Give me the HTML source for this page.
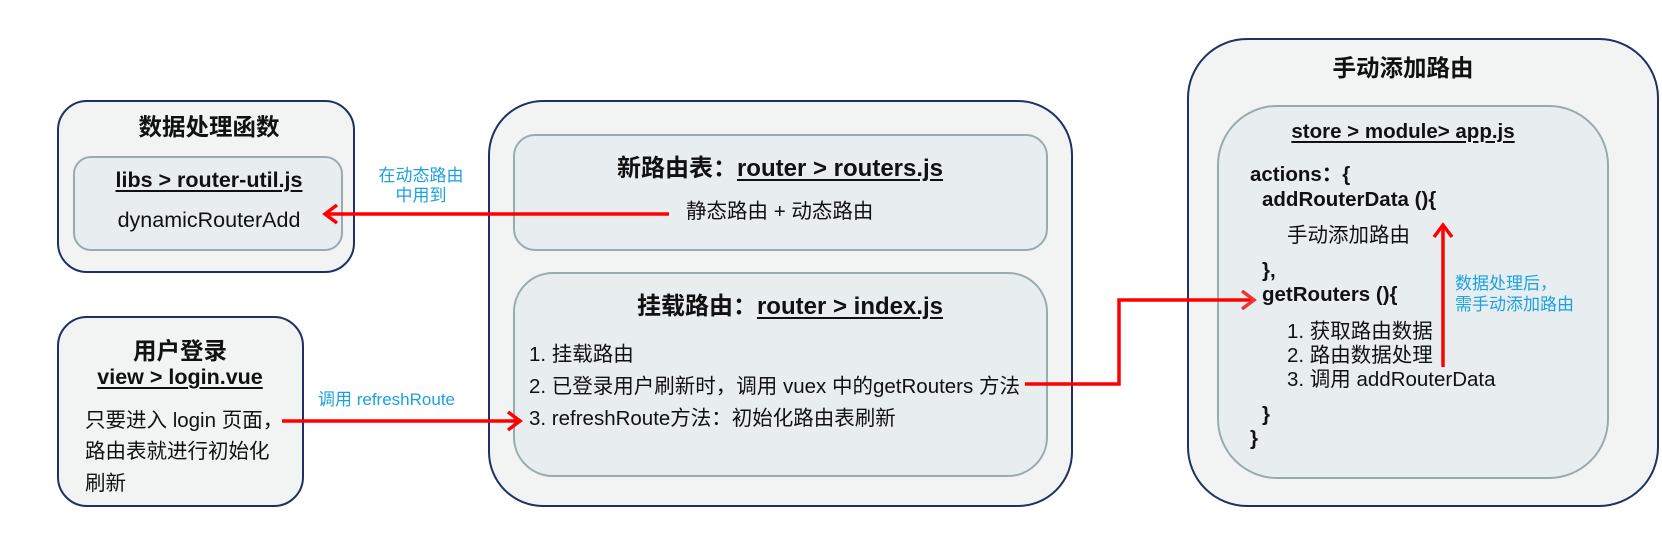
<!DOCTYPE html>
<html><head><meta charset="utf-8"><style>
*{margin:0;padding:0;box-sizing:border-box}
body{width:1662px;height:545px;background:#fff;position:relative;overflow:hidden;font-family:"Liberation Sans","Noto Sans CJK SC",sans-serif;color:#111}
.o{position:absolute;background:#f2f4f4;border:2px solid #1f3064}
.i{position:absolute;background:#e8eef0;border:2px solid #9aabb0}
.t{position:absolute;white-space:nowrap;font-size:20.5px;line-height:1}
.b{font-weight:bold}
.c{transform:translateX(-50%)}
.u{text-decoration:underline;text-underline-offset:3px}
.bl{color:#1ba1e2;font-size:17px}
svg{position:absolute;left:0;top:0}
</style></head><body>
<div class="o" style="left:57px;top:100px;width:298px;height:173px;border-radius:30px"></div>
<div class="i" style="left:73px;top:156px;width:270px;height:95px;border-radius:18px"></div>
<div class="t b c" style="left:209px;top:116px;font-size:23.5px">数据处理函数</div>
<div class="t b c u" style="left:209px;top:170px;font-size:21.5px">libs &gt; router-util.js</div>
<div class="t c" style="left:209px;top:210px;font-size:21.5px">dynamicRouterAdd</div>
<div class="t bl c" style="left:421px;top:167px">在动态路由</div>
<div class="t bl c" style="left:421px;top:187px">中用到</div>

<div class="o" style="left:57px;top:316px;width:247px;height:191px;border-radius:30px"></div>
<div class="t b c" style="left:180px;top:340px;font-size:23.5px">用户登录</div>
<div class="t b c u" style="left:180px;top:367px;font-size:21.5px">view &gt; login.vue</div>
<div class="t" style="left:85px;top:411px">只要进入 login 页面，</div>
<div class="t" style="left:85px;top:442px">路由表就进行初始化</div>
<div class="t" style="left:85px;top:474px">刷新</div>
<div class="t bl" style="left:318px;top:391px">调用 refreshRoute</div>

<div class="o" style="left:488px;top:100px;width:585px;height:407px;border-radius:55px"></div>
<div class="i" style="left:513px;top:134px;width:535px;height:117px;border-radius:22px"></div>
<div class="i" style="left:513px;top:272px;width:535px;height:205px;border-radius:40px"></div>
<div class="t b c" style="left:780px;top:157px;font-size:24px">新路由表：<span class="u">router &gt; routers.js</span></div>
<div class="t" style="left:686px;top:202px">静态路由 + 动态路由</div>
<div class="t b c" style="left:790px;top:295px;font-size:24px">挂载路由：<span class="u">router &gt; index.js</span></div>
<div class="t" style="left:529px;top:345px">1. 挂载路由</div>
<div class="t" style="left:529px;top:377px">2. 已登录用户刷新时，调用 vuex 中的getRouters 方法</div>
<div class="t" style="left:529px;top:409px">3. refreshRoute方法：初始化路由表刷新</div>

<div class="o" style="left:1187px;top:38px;width:472px;height:469px;border-radius:60px"></div>
<div class="i" style="left:1217px;top:105px;width:392px;height:374px;border-radius:60px"></div>
<div class="t b c" style="left:1403px;top:57px;font-size:23.5px">手动添加路由</div>
<div class="t b c u" style="left:1403px;top:122px;font-size:20.5px">store &gt; module&gt; app.js</div>
<div class="t b" style="left:1250px;top:165px">actions：{</div>
<div class="t b" style="left:1262px;top:190px">addRouterData (){</div>
<div class="t" style="left:1287px;top:226px">手动添加路由</div>
<div class="t b" style="left:1262px;top:261px">},</div>
<div class="t b" style="left:1262px;top:285px">getRouters (){</div>
<div class="t" style="left:1287px;top:322px">1. 获取路由数据</div>
<div class="t" style="left:1287px;top:346px">2. 路由数据处理</div>
<div class="t" style="left:1287px;top:370px">3. 调用 addRouterData</div>
<div class="t b" style="left:1262px;top:405px">}</div>
<div class="t b" style="left:1250px;top:429px">}</div>
<div class="t bl" style="left:1455px;top:275px">数据处理后，</div>
<div class="t bl" style="left:1455px;top:296px">需手动添加路由</div>

<svg width="1662" height="545" fill="none" stroke="#f00" stroke-width="3.5">
<path d="M669 214H326"/><path d="M337 205L325 214L337 223"/>
<path d="M282 421H518"/><path d="M508 412L520 421L508 430"/>
<path d="M1025 384H1119V300H1252"/><path d="M1242 291L1254 300L1242 309" stroke="#e33"/>
<path d="M1443 367V227"/><path d="M1434 237L1443 225L1452 237"/>
</svg>
</body></html>
